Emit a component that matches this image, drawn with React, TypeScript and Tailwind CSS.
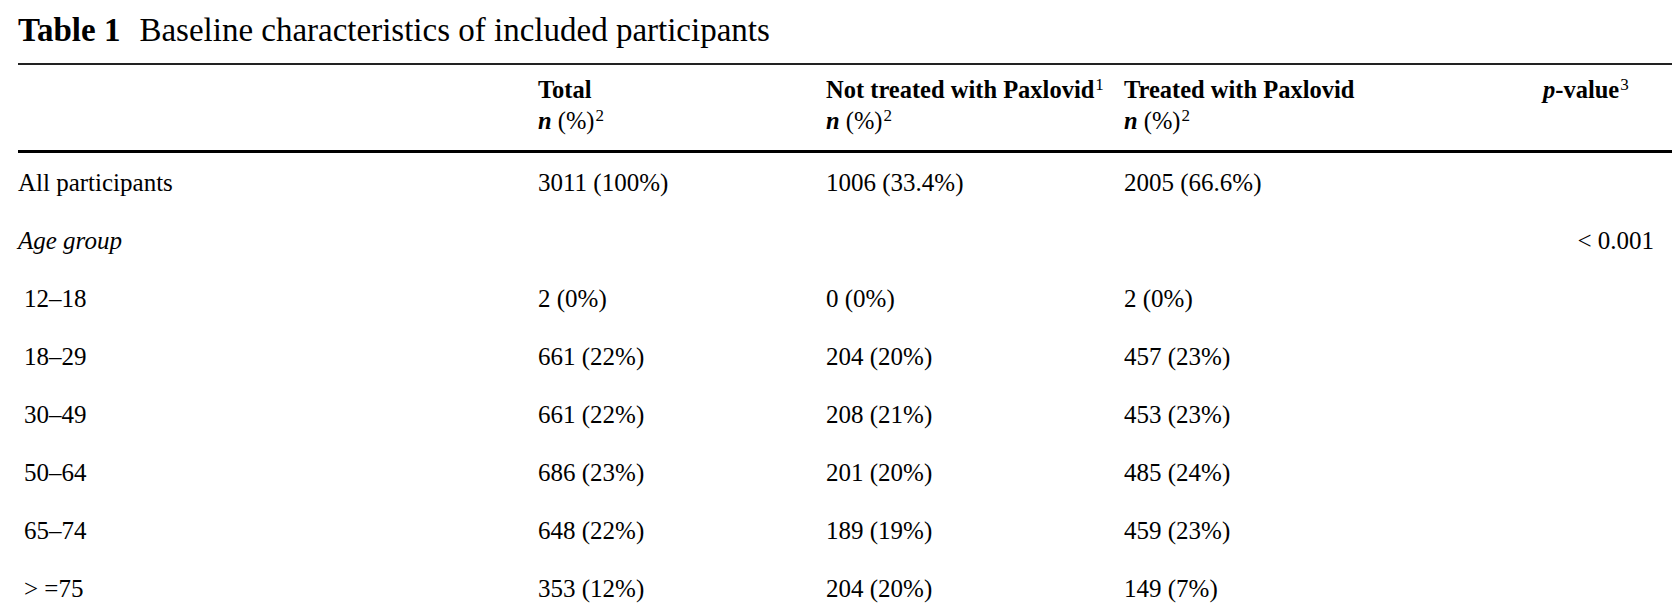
const rows = [
  { label: "All participants", total: "3011 (100%)", not: "1006 (33.4%)", yes: "2005 (66.6%)", p: "" },
  { label: "Age group", italic: true, total: "", not: "", yes: "", p: "< 0.001" },
  { label: "12–18", indent: true, total: "2 (0%)", not: "0 (0%)", yes: "2 (0%)", p: "" },
  { label: "18–29", indent: true, total: "661 (22%)", not: "204 (20%)", yes: "457 (23%)", p: "" },
  { label: "30–49", indent: true, total: "661 (22%)", not: "208 (21%)", yes: "453 (23%)", p: "" },
  { label: "50–64", indent: true, total: "686 (23%)", not: "201 (20%)", yes: "485 (24%)", p: "" },
  { label: "65–74", indent: true, total: "648 (22%)", not: "189 (19%)", yes: "459 (23%)", p: "" },
  { label: "> =75", indent: true, total: "353 (12%)", not: "204 (20%)", yes: "149 (7%)", p: "" },
];

const cols = "grid grid-cols-[520px_288px_298px_419px_1fr]";

function NPct() {
  return (
    <span>
      <span className="font-bold italic">n</span>
      <span className="font-normal"> (%)</span>
      <sup className="ml-px text-[17px] font-normal">2</sup>
    </span>
  );
}

export default function App() {
  return (
    <div className="min-h-screen bg-white pl-[18px] pt-[14px] font-['Liberation_Serif',serif] text-black">
      <h1 className="text-[33px] leading-[33px] whitespace-nowrap">
        <span className="font-bold">Table 1</span>
        <span className="ml-[19px]">Baseline characteristics of included participants</span>
      </h1>

      <div className="mt-[16px] border-t-2 border-[#222]">
        <div className={`${cols} border-b-[3px] border-black pt-[9px] pb-[14px] text-[24.5px] leading-[31px]`}>
          <div />
          <div className="flex flex-col">
            <span className="font-bold">Total</span>
            <NPct />
          </div>
          <div className="flex flex-col whitespace-nowrap">
            <span className="font-bold">
              Not treated with Paxlovid<sup className="ml-px text-[17px] font-normal">1</sup>
            </span>
            <NPct />
          </div>
          <div className="flex flex-col">
            <span className="font-bold">Treated with Paxlovid</span>
            <NPct />
          </div>
          <div className="whitespace-nowrap font-bold">
            <span className="italic">p</span>-value<sup className="ml-px text-[17px] font-normal">3</sup>
          </div>
        </div>

        {rows.map((r) => (
          <div key={r.label} className={`${cols} h-[58px] text-[25px] leading-[60px] whitespace-nowrap`}>
            <div className={`${r.italic ? "italic" : ""} ${r.indent ? "pl-[6px]" : ""}`}>{r.label}</div>
            <div>{r.total}</div>
            <div>{r.not}</div>
            <div>{r.yes}</div>
            <div className="pr-[18px] text-right">{r.p}</div>
          </div>
        ))}
      </div>
    </div>
  );
}
